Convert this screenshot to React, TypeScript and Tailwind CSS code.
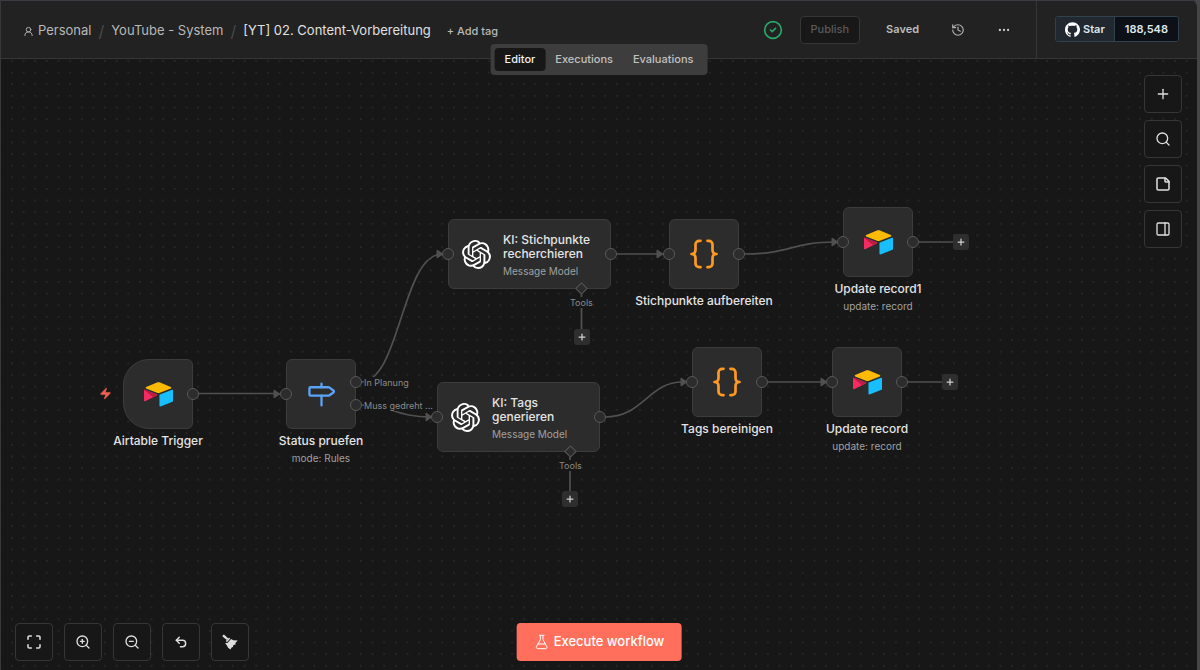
import React from 'react';
import {
  CircleCheck,
  Ellipsis,
  FlaskConical,
  History,
  Maximize,
  PanelRight,
  Plus,
  Search,
  StickyNote,
  Undo2,
  UserRound,
  Zap,
  ZoomIn,
  ZoomOut,
} from 'lucide-react';
import { SiGithub, SiOpenai } from 'react-icons/si';

type Point = { x: number; y: number };

interface NodeProps extends Point {
  title: string;
  subtitle?: string;
  trigger?: boolean;
  inputs?: boolean;
  outputs?: string[];
  icon: React.ReactNode;
}

const AirtableLogo = () => (
  <svg width="29" height="25" viewBox="11 10 177 150" aria-hidden="true">
    <path
      fill="#ffba05"
      d="M90 12.4 24.1 39.7c-3.7 1.5-3.6 6.7.1 8.2l66.2 26.2c5.8 2.3 12.3 2.3 18.1 0l66.2-26.2c3.7-1.5 3.7-6.7.1-8.2l-66-27.3c-6-2.5-12.8-2.5-18.8 0"
    />
    <path
      fill="#18bfff"
      d="M105.3 88.5v65.6c0 3.1 3.2 5.2 6.1 4.1l73.8-28.7c1.7-.7 2.8-2.3 2.8-4.1V59.8c0-3.1-3.2-5.2-6.1-4.1l-73.8 28.7c-1.7.6-2.8 2.3-2.8 4.1"
    />
    <path
      fill="#f82b60"
      d="m88.1 91.8-21.9 10.6-2.2 1.1-46.3 22.2c-2.9 1.4-6.7-.7-6.7-4V60.1c0-1.2.6-2.2 1.4-3 .4-.3.8-.6 1.2-.8 1.1-.7 2.8-.9 4.1-.3l70 27.8c3.6 1.4 3.9 6.4.4 8"
    />
    <path fill="#ba1e45" d="m88.1 91.8-21.9 10.6-53.8-45.3c.4-.3.8-.6 1.2-.8 1.1-.7 2.8-.9 4.1-.3l70 27.8c3.6 1.4 3.9 6.4.4 8" />
  </svg>
);

const BracesIcon = () => (
  <svg
    width="28"
    height="30"
    viewBox="0 0 28 30"
    fill="none"
    stroke="#ff9922"
    strokeWidth="2.7"
    strokeLinecap="round"
    strokeLinejoin="round"
    aria-hidden="true"
  >
    <path d="M10.5 1.8H9.2A3.7 3.7 0 0 0 5.5 5.5v5.3c0 2.6-1.4 4.2-4 4.2 2.6 0 4 1.6 4 4.2v5.3a3.7 3.7 0 0 0 3.7 3.7h1.3" />
    <path d="M17.5 1.8h1.3a3.7 3.7 0 0 1 3.7 3.7v5.3c0 2.6 1.4 4.2 4 4.2-2.6 0-4 1.6-4 4.2v5.3a3.7 3.7 0 0 1-3.7 3.7h-1.3" />
  </svg>
);

const SignpostIcon = () => (
  <svg
    width="29"
    height="29"
    viewBox="0 0 24 24"
    fill="none"
    stroke="#5ba3f8"
    strokeWidth="1.9"
    strokeLinecap="round"
    strokeLinejoin="round"
    aria-hidden="true"
  >
    <path d="M12 13v8M12 3v3" />
    <path d="M3 6a1 1 0 0 0-1 1v5a1 1 0 0 0 1 1h14.5a2 2 0 0 0 1.15-.365l3.2-2.317a1 1 0 0 0 0-1.635l-3.2-2.318A2 2 0 0 0 17.5 6z" />
  </svg>
);

const Broom = () => (
  <svg width="16" height="16" viewBox="0 0 16 16" fill="currentColor" aria-hidden="true">
    <path d="M.6 1.5 1.9.5 6.3 4.4 4.8 5.9.5 2.4z" />
    <path d="M7 3.8 8.3 4.6 4.9 8.2 3.8 7z" />
    <path d="m9.1 5.1 2.2 1.2 4.4.3-2.3 2.3.2 1.6-2.2.6-.5 2-1.3.4-1.2 2.1-2.3-1.9-1.2-2.1L3.1 8.9h2.3z" />
  </svg>
);

const Handle = ({ className }: { className: string }) => (
  <span className={`absolute size-3 rounded-full border border-[#585858] bg-[#2c2c2c] ${className}`} />
);

const CanvasNode: React.FC<NodeProps> = ({ x, y, title, subtitle, trigger, inputs = true, outputs = [''], icon }) => (
  <div className="absolute w-[70px]" style={{ left: x, top: y }}>
    <div
      className={`relative flex size-[70px] items-center justify-center border border-[#3c3c3c] bg-[#2c2c2c] ${
        trigger ? 'rounded-l-[26px] rounded-r-md' : 'rounded-md'
      }`}
    >
      {icon}
      {inputs && <Handle className="top-7 -left-[7px]" />}
      {outputs.length === 1 && <Handle className="top-7 -right-[7px]" />}
    </div>
    {outputs.length > 1 && (
      <div className="absolute top-[17px] left-16 flex flex-col gap-[11px]">
        {outputs.map((label) => (
          <div key={label} className="relative flex h-3 items-center pl-[14px]">
            <Handle className="left-0" />
            <span className="bg-[#171717] text-[9px] leading-[11px] whitespace-nowrap text-[#8a8a8a]">{label}</span>
          </div>
        ))}
      </div>
    )}
    <div className="absolute top-[74px] left-1/2 -translate-x-1/2 text-center whitespace-nowrap">
      <p className="text-xs font-medium text-[#e4e4e4]">{title}</p>
      {subtitle && <p className="text-[10px] leading-[18px] text-[#a0a0a0]">{subtitle}</p>}
    </div>
    {trigger && <Zap size={13} className="absolute top-7 -left-6 fill-[#ee6352] text-[#ee6352]" strokeWidth={1} />}
  </div>
);

const AgentNode = ({ x, y, title }: Point & { title: string }) => (
  <div className="absolute" style={{ left: x, top: y }}>
    <div className="relative flex h-[70px] w-[163px] items-center rounded-md border border-[#3c3c3c] bg-[#2c2c2c] pl-[13px]">
      <SiOpenai size={29} className="shrink-0 text-white" />
      <div className="ml-3 w-[100px] pt-0.5">
        <p className="text-xs leading-[14px] font-medium text-[#e4e4e4]">{title}</p>
        <p className="mt-[3px] text-[10px] leading-[14px] text-[#a0a0a0]">Message Model</p>
      </div>
      <Handle className="top-7 -left-[7px]" />
      <Handle className="top-7 -right-[7px]" />
      <span className="absolute right-6 -bottom-[5px] size-[9px] rotate-45 border border-[#585858] bg-[#2c2c2c]" />
    </div>
    <span className="absolute top-[78px] left-[122px] bg-[#171717] text-[9px] leading-[11px] text-[#8a8a8a]">Tools</span>
  </div>
);

const AddButton = ({ x, y }: Point) => (
  <button
    aria-label="Add node"
    className="absolute flex size-4 items-center justify-center rounded-[3px] bg-[#2e2e2e] text-[#d0d0d0]"
    style={{ left: x, top: y }}
  >
    <Plus size={10} strokeWidth={3} />
  </button>
);

const IconButton = ({ label, children }: { label: string; children: React.ReactNode }) => (
  <button
    aria-label={label}
    className="flex size-[38px] items-center justify-center rounded border border-[#363636] bg-[#171717] text-[#dedede] hover:bg-[#222222]"
  >
    {children}
  </button>
);

// Connections between nodes, in canvas coordinates
const edges = [
  'M198 334.5H275',
  'M360 323C399 323 401 195 441 195',
  'M360 346C392 346 394 358 430 358',
  'M615 195H658',
  'M743 195C790 195 790 183 834 183',
  'M603 358C644 358 646 323 682 323',
  'M767 323H822',
  'M918 183H953',
  'M906 323H942',
  'M580.5 235V271',
  'M569 398V433',
];

const arrows: Point[] = [
  { x: 273, y: 335 },
  { x: 436, y: 195 },
  { x: 425, y: 358 },
  { x: 656, y: 195 },
  { x: 831, y: 183 },
  { x: 680, y: 323 },
  { x: 820, y: 323 },
];

const Canvas = () => (
  <main className="relative flex-1 overflow-hidden bg-[#171717]">
    <svg className="absolute inset-0 size-full" aria-hidden="true">
      <defs>
        <pattern id="dots" x="5.2" y="-3.8" width="11.63" height="11.63" patternUnits="userSpaceOnUse">
          <circle cx="5.8" cy="5.8" r="0.6" fill="#474747" />
        </pattern>
      </defs>
      <rect width="100%" height="100%" fill="url(#dots)" />
      <g fill="none" stroke="#505050" strokeWidth="1.7">
        {edges.map((d) => (
          <path key={d} d={d} />
        ))}
      </g>
      {arrows.map(({ x, y }) => (
        <path
          key={`${x}-${y}`}
          d={`M${x} ${y - 4}V${y + 4}L${x + 6} ${y}Z`}
          fill="#505050"
          stroke="#505050"
          strokeLinejoin="round"
        />
      ))}
    </svg>

    <CanvasNode x={122} y={300} title="Airtable Trigger" trigger inputs={false} icon={<AirtableLogo />} />
    <CanvasNode
      x={285}
      y={300}
      title="Status pruefen"
      subtitle="mode: Rules"
      outputs={['In Planung', 'Muss gedreht ...']}
      icon={<SignpostIcon />}
    />
    <AgentNode x={447} y={160} title="KI: Stichpunkte recherchieren" />
    <AgentNode x={436} y={323} title="KI: Tags generieren" />
    <CanvasNode x={668} y={160} title="Stichpunkte aufbereiten" icon={<BracesIcon />} />
    <CanvasNode x={842} y={148} title="Update record1" subtitle="update: record" icon={<AirtableLogo />} />
    <CanvasNode x={691} y={288} title="Tags bereinigen" icon={<BracesIcon />} />
    <CanvasNode x={831} y={288} title="Update record" subtitle="update: record" icon={<AirtableLogo />} />

    <AddButton x={952} y={175} />
    <AddButton x={941} y={315} />
    <AddButton x={573} y={270} />
    <AddButton x={561} y={432} />

    <div className="absolute top-4 right-[15px] flex flex-col gap-[7px]">
      <IconButton label="Add node"><Plus size={16} /></IconButton>
      <IconButton label="Search"><Search size={16} /></IconButton>
      <IconButton label="Add sticky note"><StickyNote size={16} strokeWidth={2.3} /></IconButton>
      <IconButton label="Toggle panel"><PanelRight size={16} /></IconButton>
    </div>

    <div className="absolute bottom-[9px] left-[14px] flex gap-[11px]">
      <IconButton label="Fit view"><Maximize size={16} strokeWidth={2.3} /></IconButton>
      <IconButton label="Zoom in"><ZoomIn size={16} /></IconButton>
      <IconButton label="Zoom out"><ZoomOut size={16} /></IconButton>
      <IconButton label="Undo"><Undo2 size={14} strokeWidth={2.5} /></IconButton>
      <IconButton label="Tidy up"><Broom /></IconButton>
    </div>

    <button className="absolute bottom-[9px] left-1/2 flex h-[38px] -translate-x-1/2 items-center gap-1 rounded bg-[#ff6f5c] px-[17px] text-[13px] font-medium whitespace-nowrap text-white">
      <FlaskConical size={16} strokeWidth={1.5} />
      Execute workflow
    </button>
  </main>
);

const Header = () => (
  <header className="relative z-10 flex h-[58px] items-center border-b border-[#363636] bg-[#222222]">
    <nav className="flex items-center gap-[7px] pt-[3px] pl-[22px] text-[13px] whitespace-nowrap text-[#b8b8b8]">
      <a href="#" className="flex items-center gap-1">
        <UserRound size={11} />
        Personal
      </a>
      <span className="text-base text-[#4a4a4a]">/</span>
      <a href="#">YouTube - System</a>
      <span className="text-base text-[#4a4a4a]">/</span>
      <span className="text-[#e0e0e0]">[YT] 02. Content-Vorbereitung</span>
      <button className="ml-[9px] text-[11px] font-medium">+ Add tag</button>
    </nav>

    <div className="absolute top-[43px] left-1/2 flex -translate-x-1/2 rounded bg-[#3d3d3d] p-1 text-[11px] font-medium text-[#c0c0c0]">
      <button className="h-[23px] rounded bg-[#171717] px-[10px] text-[#f0f0f0]">Editor</button>
      <button className="h-[23px] px-[10px]">Executions</button>
      <button className="h-[23px] px-[10px]">Evaluations</button>
    </div>

    <div className="ml-auto flex items-center">
      <CircleCheck size={20} className="text-[#29a568]" />
      <button disabled className="ml-[17px] h-7 rounded border border-[#363636] bg-[#181818] px-[10px] text-[11px] font-medium text-[#5a5a5a]">
        Publish
      </button>
      <span className="ml-[26px] text-[11px] font-semibold text-[#bdbdbd]">Saved</span>
      <button aria-label="Version history" className="ml-8 text-[#b0b0b0]">
        <History size={14} />
      </button>
      <button aria-label="More actions" className="ml-8 text-[#c8c8c8]">
        <Ellipsis size={14} />
      </button>
    </div>
    <div className="ml-[25px] flex h-full items-start border-l border-[#363636] pt-[15px] pr-[18px] pl-[18px]">
      <a href="#" className="flex h-[26px] overflow-hidden rounded-[3px] border border-[#30404c] text-[11px] font-semibold text-[#dfe6ec]">
        <span className="flex items-center gap-[3px] bg-[#212830] px-[9px]">
          <SiGithub size={15} className="text-white" />
          Star
        </span>
        <span className="flex items-center border-l border-[#30404c] bg-[#0d1117] px-[10px]">188,548</span>
      </a>
    </div>
  </header>
);

export default function App() {
  return (
    <div className="min-h-screen bg-[#454548] font-['Inter',sans-serif]">
      <div className="flex min-h-screen flex-col overflow-hidden rounded-tr-lg border-t border-r-3 border-l border-t-[#3c3c42] border-r-[#454548] border-l-[#38383a] bg-[#171717]">
        <Header />
        <Canvas />
      </div>
    </div>
  );
}
